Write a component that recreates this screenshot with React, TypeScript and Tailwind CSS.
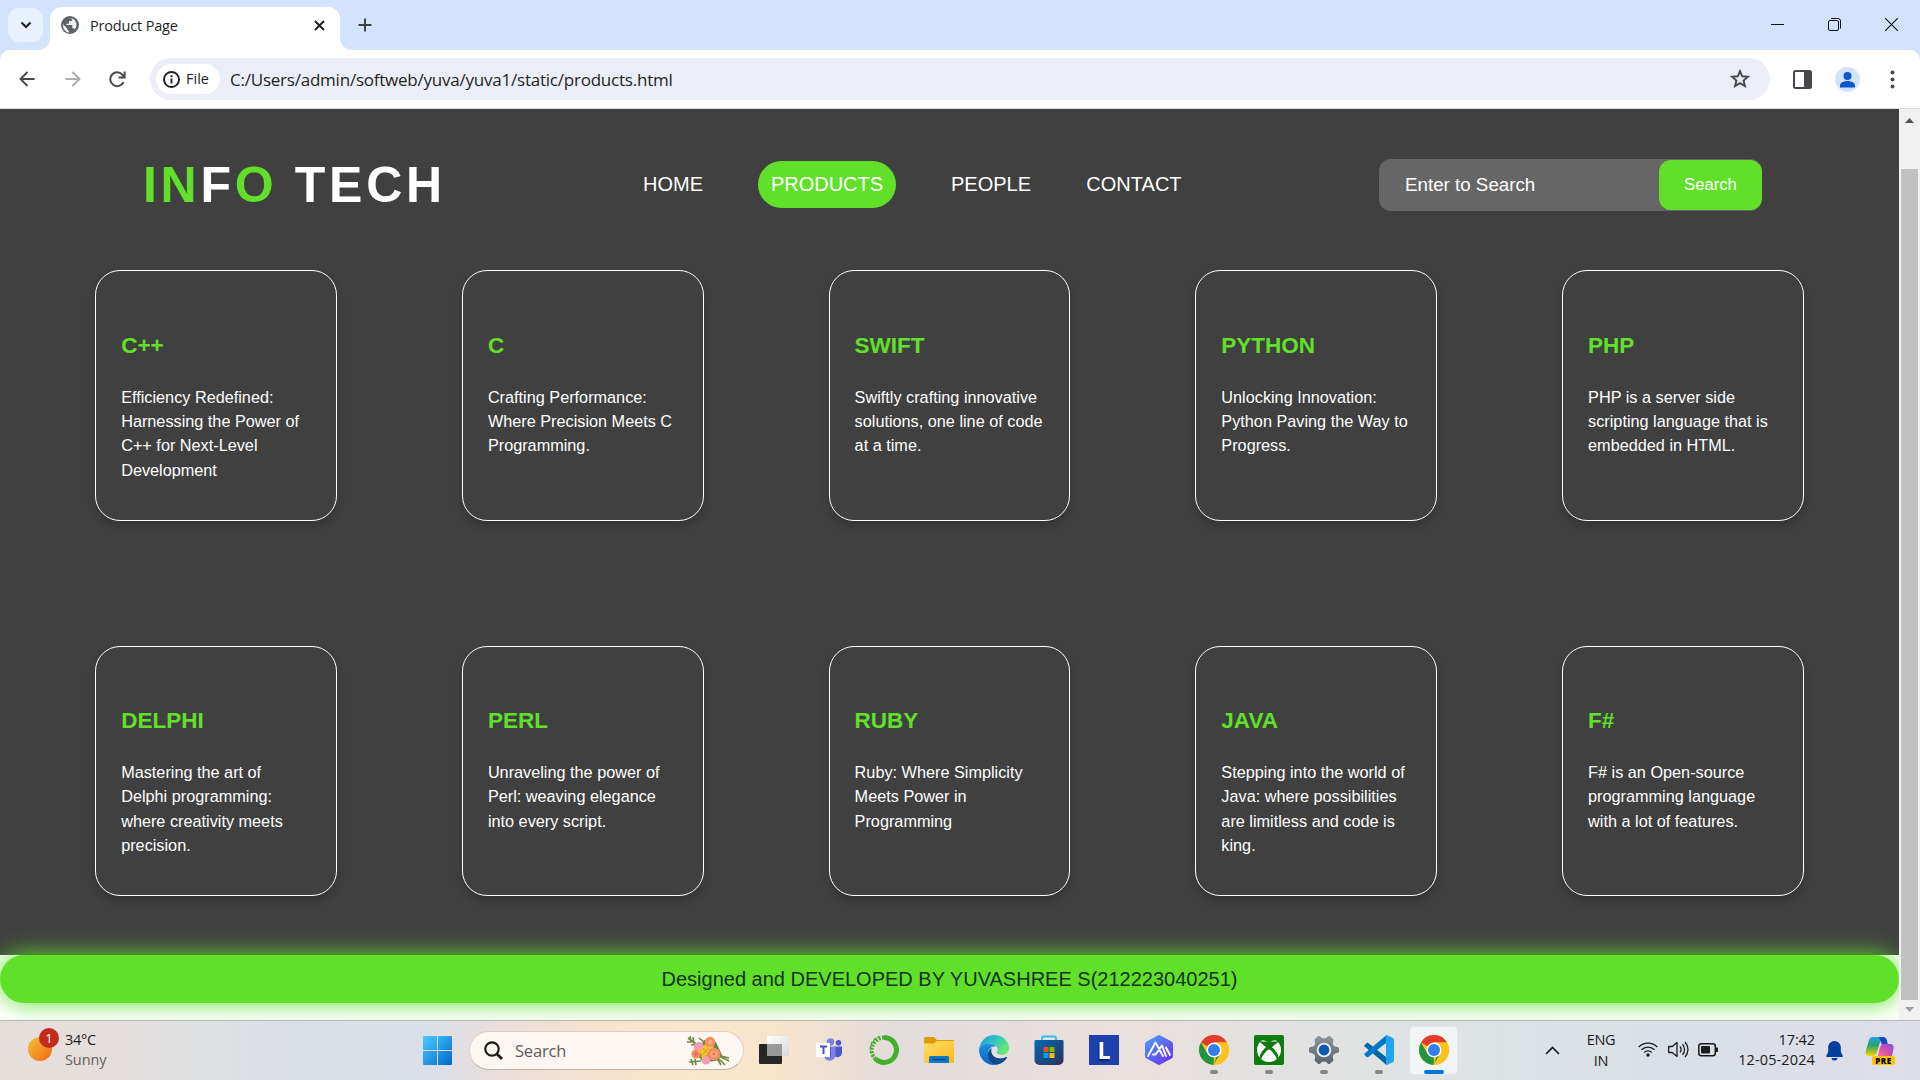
import React from "react";

const sans = "font-['Open_Sans',sans-serif]";
const arial = "font-['Liberation_Sans',Arial,sans-serif]";

type Product = { name: string; lines: string[] };

const products: Product[] = [
  { name: "C++", lines: ["Efficiency Redefined:", "Harnessing the Power of", "C++ for Next-Level", "Development"] },
  { name: "C", lines: ["Crafting Performance:", "Where Precision Meets C", "Programming."] },
  { name: "SWIFT", lines: ["Swiftly crafting innovative", "solutions, one line of code", "at a time."] },
  { name: "PYTHON", lines: ["Unlocking Innovation:", "Python Paving the Way to", "Progress."] },
  { name: "PHP", lines: ["PHP is a server side", "scripting language that is", "embedded in HTML."] },
  { name: "DELPHI", lines: ["Mastering the art of", "Delphi programming:", "where creativity meets", "precision."] },
  { name: "PERL", lines: ["Unraveling the power of", "Perl: weaving elegance", "into every script."] },
  { name: "RUBY", lines: ["Ruby: Where Simplicity", "Meets Power in", "Programming"] },
  { name: "JAVA", lines: ["Stepping into the world of", "Java: where possibilities", "are limitless and code is", "king."] },
  { name: "F#", lines: ["F# is an Open-source", "programming language", "with a lot of features."] },
];

function TitleBar() {
  return (
    <div className="flex h-[50px] items-start bg-[#d3e3fd]">
      <div className="ml-2 mt-2 flex h-[34px] w-[35px] items-center justify-center rounded-[11px] bg-[#e9f0fe]">
        <svg width="12" height="8" viewBox="0 0 12 8" fill="none" stroke="#1f1f1f" strokeWidth="2.2">
          <path d="M1.500 1.500 6 6l4.500-4.500" />
        </svg>
      </div>
      <svg className="ml-[-5px] mt-[38px]" width="12" height="12" viewBox="0 0 12 12">
        <path d="M12 0v12H0A12 12 0 0 0 12 0Z" fill="#fff" />
      </svg>
      <div className="mt-[7px] flex h-[43px] w-[290px] items-center rounded-t-[12px] bg-white pb-[7px] pl-[11px] pr-[15px]">
        <svg width="18" height="18" viewBox="0 0 18 18">
          <circle cx="9" cy="9" r="9" fill="#5f6368" />
          <path d="M2 8.300 6.200 12.500v1l1.800 1.800v1.500A7.900 7.900 0 0 1 2 8.300Z M7.500 2h3.700v1.500c0 .9-.7 1.600-1.600 1.600H8v1.600c0 .6-.4 1-1 1H5.500V9h4.800c.6 0 1 .4 1 1v2.300h.9c.8 0 1.300.4 1.600 1.100A7 7 0 0 0 11.500 2.500Z" fill="#fff" opacity=".92" />
        </svg>
        <span className={`${sans} ml-[11px] flex-1 whitespace-nowrap pt-px text-[14.500px] leading-5 tracking-[-0.17px] text-[#1f1f1f]`}>Product Page</span>
        <svg width="11" height="11" viewBox="0 0 11 11" stroke="#1f1f1f" strokeWidth="1.900">
          <path d="m1 1 9 9M10 1l-9 9" />
        </svg>
      </div>
      <svg className="mt-[38px]" width="12" height="12" viewBox="0 0 12 12">
        <path d="M0 0v12h12A12 12 0 0 1 0 0Z" fill="#fff" />
      </svg>
      <svg className="ml-[6px] mt-[18px]" width="14" height="14" viewBox="0 0 14 14" stroke="#3c3f43" strokeWidth="1.900">
        <path d="M7 .5v13M.5 7h13" />
      </svg>
      <div className="ml-auto mr-[22px] mt-[18px] flex items-start gap-[43.500px]">
        <svg width="13" height="13" viewBox="0 0 13 13" stroke="#111" strokeWidth="1">
          <path d="M0 6.500h13" />
        </svg>
        <svg width="14" height="14" viewBox="0 0 14 14" fill="none" stroke="#111" strokeWidth="1">
          <rect x=".5" y="2.500" width="10" height="10" rx="1.500" />
          <path d="M3 .5h7A2.500 2.500 0 0 1 12.500 3v7.500" />
        </svg>
        <svg width="13" height="13" viewBox="0 0 13 13" stroke="#111" strokeWidth="1.100">
          <path d="m0 0 13 13M13 0 0 13" />
        </svg>
      </div>
    </div>
  );
}

function Toolbar() {
  return (
    <div className="bg-[#d3e3fd]">
      <div className="flex h-[59px] items-start rounded-t-[10px] border-b border-[#dcdfe0] bg-white pt-2">
        <div className="flex h-[42px] items-center pl-[19px]">
          <svg width="16" height="16" viewBox="0 0 16 16" fill="none" stroke="#46484b" strokeWidth="1.900">
            <path d="M15.500 8H1.500M8.500 1 1.500 8l7 7" />
          </svg>
          <svg className="ml-[30px]" width="16" height="16" viewBox="0 0 16 16" fill="none" stroke="#a9abad" strokeWidth="1.900">
            <path d="M.5 8h14M7.500 1l7 7-7 7" />
          </svg>
          <svg className="ml-[28px]" width="17" height="17" viewBox="0 0 17 17" fill="none" stroke="#46484b" strokeWidth="2">
            <path d="M14.500 11A6.900 6.900 0 1 1 13.700 4.100L15 5.800" />
            <path d="M15.600.5v6h-6" />
          </svg>
        </div>
        <div className="ml-[24px] flex h-[42px] w-[1620px] items-center rounded-full bg-[#ebeef7] pl-[6px] pr-[20px]">
          <div className="flex h-[30px] w-[64px] items-center rounded-full bg-white pl-[7px]">
            <svg width="17" height="17" viewBox="0 0 17 17" fill="none" stroke="#1f1f1f" strokeWidth="1.900">
              <circle cx="8.500" cy="8.500" r="7.500" />
              <path d="M8.500 7.500v5M8.500 4.200v2" />
            </svg>
            <span className={`${sans} ml-[6px] text-[14.500px] font-medium leading-5 text-[#1f1f1f]`}>File</span>
          </div>
          <span className={`${sans} ml-[10px] flex-1 whitespace-nowrap pt-px text-[17px] leading-6 tracking-[-0.225px] text-[#1f1f1f]`}>C:/Users/admin/softweb/yuva/yuva1/static/products.html</span>
          <svg width="20" height="20" viewBox="0 0 20 20" fill="none" stroke="#46484b" strokeWidth="1.900">
            <path d="m10 2.100 2.200 5.200 5.700.5-4.300 3.700 1.300 5.500-4.900-2.900L5.100 17l1.300-5.500L2.100 7.800l5.700-.5Z" />
          </svg>
        </div>
        <div className="flex h-[42px] items-center pl-[23px]">
          <svg width="19" height="19" viewBox="0 0 19 19">
            <rect x="1" y="1" width="17" height="17" rx="1.500" fill="#fff" stroke="#46484b" strokeWidth="2" />
            <path d="M11 1h6.500v17H11Z" fill="#46484b" />
          </svg>
          <svg className="ml-[23px]" width="25" height="25" viewBox="0 0 25 25">
            <circle cx="12.500" cy="12.500" r="12.500" fill="#d3e3fd" />
            <circle cx="12.500" cy="9" r="4" fill="#0b57d0" />
            <path d="M5 20.500v-2c0-3 4-4.600 7.500-4.600s7.500 1.600 7.500 4.600v2Z" fill="#0b57d0" />
          </svg>
          <svg className="ml-[30px]" width="5" height="19" viewBox="0 0 5 19" fill="#46484b">
            <circle cx="2.500" cy="2.500" r="2" />
            <circle cx="2.500" cy="9.500" r="2" />
            <circle cx="2.500" cy="16.500" r="2" />
          </svg>
        </div>
      </div>
    </div>
  );
}

function SiteHeader() {
  return (
    <header className="flex h-[152px] items-start text-white">
      <div className="ml-[143px] mt-[47px] w-[500px] whitespace-nowrap text-[50px] font-bold leading-[58px] tracking-[3.700px]">
        <span className="text-[#61e02a]">IN</span>F<span className="text-[#61e02a]">O</span> TECH
      </div>
      <nav className="mt-[52px] flex h-[47px] w-[736px] items-center gap-[55.300px] text-[20px] leading-[23px]">
        <a className="pb-px">HOME</a>
        <a className="flex h-[47px] items-center rounded-[24px] bg-[#61e02a] px-[12.600px]">PRODUCTS</a>
        <a className="pb-px">PEOPLE</a>
        <a className="pb-px">CONTACT</a>
      </nav>
      <div className="mt-[50px] flex h-[52px] w-[383px] items-center justify-between rounded-[12px] bg-[#666666] pl-[26px]">
        <span className="pb-px text-[18.750px] leading-6">Enter to Search</span>
        <button className="h-[50px] w-[103px] rounded-[12px] bg-[#61e02a] pb-px text-[16.670px]">Search</button>
      </div>
    </header>
  );
}

function Card({ name, lines }: Product) {
  return (
    <article className="whitespace-nowrap rounded-[25px] border border-white pl-[25px] pt-[61.800px] text-white shadow-[0_5px_10px_rgba(0,0,0,0.2)]">
      <h2 className="text-[22.500px] font-bold leading-[26px] text-[#61e02a]">{name}</h2>
      <p className="mt-[25.650px] text-[16.250px] leading-[24.375px]">
        {lines.map((l) => (
          <span key={l} className="block">{l}</span>
        ))}
      </p>
    </article>
  );
}

function Page() {
  return (
    <div className="flex h-[911px]">
      <div className={`${arial} flex w-[1899px] flex-col overflow-hidden bg-white`}>
        <main className="h-[846px] bg-[#404040]">
          <SiteHeader />
          <section className="ml-[95.150px] mt-[9.160px] grid grid-cols-[repeat(5,241.650px)] grid-rows-[repeat(2,250.400px)] gap-x-[125.100px] gap-y-[125px]">
            {products.map((p) => (
              <Card key={p.name} {...p} />
            ))}
          </section>
        </main>
        <footer className="relative flex h-[48px] items-center justify-center rounded-full bg-[#61e02a] text-[20px] leading-6 text-[#12331f] shadow-[0_0_25px_#61e02a]">
          Designed and DEVELOPED BY YUVASHREE S(212223040251)
        </footer>
      </div>
      <div className="flex w-[21px] flex-col items-center bg-[#f1f1f1]">
        <svg className="mt-[9px]" width="9" height="5" viewBox="0 0 9 5"><path d="M0 5 4.500 0 9 5Z" fill="#505050" /></svg>
        <div className="mt-[46px] h-[831px] w-[17px] bg-[#c1c1c1]" />
        <svg className="mt-[7px]" width="9" height="5" viewBox="0 0 9 5"><path d="M0 0h9L4.500 5Z" fill="#a0a0a0" /></svg>
      </div>
    </div>
  );
}

function Flowers() {
  return (
    <svg width="44" height="32" viewBox="0 0 44 32">
      <g stroke="#6f8a45" strokeWidth="1.600" fill="none">
        <path d="M1 3 12 11M3 1l1 5M6 2l1 6M0 7l6 0M4 10l6-1M2 27l12-1M4 24l2 6M8 24l1 6M30 20l12 3M30 20l12 6M29 21l9 9M28 20l6 10" />
        <path d="M12 3l5 4" />
      </g>
      <path d="m9 19 8-14 12 2 6 13-6 6-13 1Z" fill="#5f8a49" />
      <circle cx="12" cy="12" r="5" fill="#f79ab8" />
      <circle cx="23" cy="7" r="5.200" fill="#f58b62" />
      <circle cx="23" cy="7" r="2.500" fill="#fba583" />
      <circle cx="9" cy="19" r="4.500" fill="#f58b62" />
      <circle cx="9" cy="19" r="2" fill="#e8705a" />
      <circle cx="19" cy="25" r="4.500" fill="#f79ab8" />
      <path d="m18 9 3 3 6-1-2 5 1 5-6-1-5 4-1-5-4-3 5-2Z" fill="#f2c52e" />
      <path d="m13 22 9-9M16 13l6 7" stroke="#d99b1a" />
      <circle cx="27" cy="19" r="6.300" fill="#f58b62" />
      <circle cx="27" cy="19" r="3.500" fill="#fba583" />
      <circle cx="27" cy="19" r="1.600" fill="#e8705a" />
    </svg>
  );
}

function Chrome() {
  return (
    <svg width="30" height="30" viewBox="0 0 30 30">
      <circle cx="15" cy="15" r="15" fill="#fcc31e" />
      <path d="M15 15 2 7.500A15 15 0 0 1 28 7.500H15Z" fill="#e33b2e" />
      <path d="M2 7.500 8.500 18.700 15 22l-0.500 8A15 15 0 0 1 2 7.500Z" fill="#229342" />
      <path d="M14.500 30 21.500 18.700 15 15 8.500 18.700A7.500 7.500 0 0 0 17.500 22Z" fill="#229342" />
      <path d="M21.400 18.500 14.600 30A15 15 0 0 0 28 7.500H15Z" fill="#fcc31e" />
      <circle cx="15" cy="15" r="7.500" fill="#fff" />
      <circle cx="15" cy="15" r="6" fill="#317ef0" />
    </svg>
  );
}

function TaskView() {
  return (
    <svg width="30" height="28" viewBox="0 0 30 28">
      <defs>
        <linearGradient id="tv" x1="0" y1="0" x2="1" y2="1"><stop stopColor="#fff" /><stop offset="1" stopColor="#d6d8da" /></linearGradient>
      </defs>
      <rect y="8" width="23" height="20" rx="1" fill="#262626" />
      <rect x="8" width="22" height="20" rx="1" fill="url(#tv)" />
      <path d="M8 8h15v12H8Z" fill="#999" />
    </svg>
  );
}

function Teams() {
  return (
    <svg width="26" height="24" viewBox="0 0 26 24">
      <circle cx="14.500" cy="4" r="3.700" fill="#7b83eb" />
      <circle cx="22.500" cy="4.800" r="2.800" fill="#5059c9" />
      <path d="M18 8.500h8v7a4.500 4.500 0 0 1-8 2Z" fill="#5059c9" />
      <path d="M8.500 8.500h11V17a6 6 0 0 1-11 3Z" fill="#7b83eb" />
      <path d="M9 9h6v10H9Z" fill="#4b53bc" />
      <rect y="5" width="14" height="14" fill="#fff" />
      <path d="M4 8.500h7M7.500 8.500V16" stroke="#4b53bc" strokeWidth="2" />
    </svg>
  );
}

function Anaconda() {
  return (
    <svg width="30" height="30" viewBox="0 0 30 30" fill="none" stroke="#43b02a">
      <path d="M15 2.600A12.400 12.400 0 1 1 6.500 24" strokeWidth="5" />
      <path d="M6.500 24A12.400 12.400 0 0 1 15 2.600" strokeWidth="4" strokeDasharray="2 1.400" />
      <path d="M4.500 22A12.400 12.400 0 0 1 12 1.500" strokeWidth="1.500" strokeDasharray="2.500 2" />
    </svg>
  );
}

function Folder() {
  return (
    <svg width="30" height="26" viewBox="0 0 30 26">
      <defs>
        <linearGradient id="fd" x1="0" y1="0" x2="1" y2="1"><stop stopColor="#ffdd6b" /><stop offset="1" stopColor="#fbb917" /></linearGradient>
      </defs>
      <path d="M0 1.500C0 .7.700 0 1.500 0H10l3 3h15.500c.8 0 1.500.7 1.500 1.500V9H0Z" fill="#dd9c06" />
      <path d="M0 6.500h10L13 4h17v22H0Z" fill="url(#fd)" />
      <path d="M5 26v-5.500C5 19.700 5.700 19 6.500 19h17c.8 0 1.500.7 1.500 1.500V26Z" fill="#0f78c8" />
      <path d="M8.500 22.500h13" stroke="#08488a" strokeWidth="1.500" />
    </svg>
  );
}

function Edge() {
  return (
    <svg width="30" height="30" viewBox="0 0 30 30">
      <defs>
        <linearGradient id="eg" x1="0" y1="0" x2="1" y2=".5"><stop stopColor="#1a9ce0" /><stop offset=".55" stopColor="#35c4c0" /><stop offset="1" stopColor="#66eb6e" /></linearGradient>
        <linearGradient id="eb" x1="0" y1="0" x2="0" y2="1"><stop stopColor="#1a94e0" /><stop offset="1" stopColor="#0b63c0" /></linearGradient>
      </defs>
      <path d="M0 15C1 6 7 0 15 0c9 0 15 6.500 15 12.500 0 5-3.500 7.500-7.500 7.500-3 0-5-1-5-2.500 0-1 1-1.500 1-3.500 0-3-3.500-5.500-8-5.500C5 8.500 1 11.500 0 15Z" fill="url(#eg)" />
      <path d="M0 15c1-4 5-6.500 10-6.500 3 0 5.500 1 7 2.700C12 11 9 14.500 9 19c0 5 3.500 9.500 8.500 10.800A15 15 0 0 1 0 15Z" fill="url(#eb)" />
      <path d="M12.500 13C10 15 8.500 17.500 9 21c.8 5 4.500 8.500 9 8.800 4.500-.8 8-3.500 10-7 .3-.7-.3-1-1-.7-6 2.900-14 .4-14.500-6Z" fill="#114a8b" />
      <path d="M12.500 16c0-2.500 1.800-4.200 3.500-4.200 1.400 0 2.500 1.200 2.500 2.700 0 1.300-1 1.900-1 3 0 1.500 2 2.500 5 2.500 1.800 0 3.500-.5 5-1.600-1 2-2.500 4-5 4.600-5 1-10-2-10-7Z" fill="#e6dedd" />
    </svg>
  );
}

function Store() {
  return (
    <svg width="30" height="30" viewBox="0 0 30 30">
      <defs>
        <linearGradient id="st" x1="0" y1="0" x2="1" y2="1"><stop stopColor="#0669b4" /><stop offset="1" stopColor="#2a3358" /></linearGradient>
      </defs>
      <path d="M8 7V3c0-1 .5-1.500 1.500-1.500h11C21.500 1.500 22 2 22 3v4" fill="none" stroke="#2cc0f5" strokeWidth="1.800" />
      <path d="M.5 6.500C.5 5.500 1 5 2 5h26c1 0 1.500.5 1.500 1.500V25a5 5 0 0 1-5 5h-19a5 5 0 0 1-5-5Z" fill="url(#st)" />
      <rect x="9.500" y="12" width="5" height="5" fill="#f25022" />
      <rect x="15.500" y="12" width="5" height="5" fill="#7fba00" />
      <rect x="9.500" y="18" width="5" height="5" fill="#00a4ef" />
      <rect x="15.500" y="18" width="5" height="5" fill="#ffb900" />
    </svg>
  );
}

function LApp() {
  return (
    <div className="flex h-[30px] w-[30px] items-center justify-center bg-[#1e3fae] pl-px">
      <span className={`${sans} text-[23px] font-bold leading-[30px] text-white [text-shadow:-1px_2px_1px_#0a2763]`}>L</span>
    </div>
  );
}

function HexApp() {
  return (
    <svg width="28" height="30" viewBox="0 0 28 30">
      <defs>
        <linearGradient id="hx" x1="0" y1="0" x2=".8" y2="1"><stop stopColor="#4ba3f5" /><stop offset="1" stopColor="#6a35ee" /></linearGradient>
      </defs>
      <path d="m14 1 12 6.500q1 .5 1 1.500v12q0 1-1 1.500L14 29 2 22.500Q1 22 1 21V9q0-1 1-1.500Z" fill="url(#hx)" stroke="url(#hx)" strokeWidth="2" />
      <path d="m3 21 7.500-13.500L18 21M8 19.500h2.500l6.500-9L21 21M21 12.500l4 7.500" fill="none" stroke="#fff" strokeWidth="1.900" strokeLinecap="round" strokeLinejoin="round" />
    </svg>
  );
}

function Xbox() {
  return (
    <svg width="30" height="30" viewBox="0 0 30 30">
      <rect width="30" height="30" rx="2" fill="#107c10" />
      <circle cx="15" cy="15" r="12" fill="#fff" />
      <path d="M6.500 5.500C9 4.500 13 6 15 7.500c2-1.500 6-3 8.500-2C21.500 3 18 2 15 2S8.500 3 6.500 5.500Z" fill="#107c10" />
      <path d="M7 6.500c-1 .5 3 2 8 7.500 5-5.500 9-7 8-7.500M15 11C9.500 14.500 5.500 20 6 24.500 8 19 13 14.500 15 12.500c2 2 7 6.500 9 12C24.500 20 20.500 14.500 15 11" fill="#107c10" stroke="#107c10" strokeWidth="1.600" />
    </svg>
  );
}

function Gear() {
  return (
    <svg width="30" height="30" viewBox="0 0 30 30">
      <defs>
        <linearGradient id="gr" x1="0" y1="0" x2="0" y2="1"><stop stopColor="#8b949d" /><stop offset="1" stopColor="#5c656e" /></linearGradient>
      </defs>
      <path d="M5.500 4.500 9 1.300q1-.7 2 0l1.500 1.400q2.500 1.400 5 0L19 1.300q1-.7 2 0l3.500 3.200-.7 4q.2 2.500 2.500 3l3 1q.7.200.7 1v3q0 .8-.7 1l-3 1q-2.300.5-2.500 3l.7 4-3.500 3.200q-1 .7-2 0l-1.500-1.400q-2.500-1.400-5 0L11 28.700q-1 .7-2 0l-3.500-3.200.7-4q-.2-2.500-2.500-3l-3-1q-.7-.2-.7-1v-3q0-.8.7-1l3-1q2.300-.5 2.500-3Z" fill="url(#gr)" />
      <circle cx="15" cy="15" r="7.300" fill="#e9ebee" />
      <circle cx="15" cy="15" r="5.400" fill="#0b5cad" />
    </svg>
  );
}

function VsCode() {
  return (
    <svg width="30" height="30" viewBox="0 0 30 30">
      <path d="M.5 10.200 2.700 8q.7-.6 1.500 0L22 22v7.500L.6 11.500q-.6-.7-.1-1.300Z" fill="#0065a9" />
      <path d="M.5 19.800 2.700 22q.7.600 1.500 0L22 8V.5L.6 18.500q-.6.700-.1 1.300Z" fill="#007acc" />
      <path d="M22 .3q.5-.4 1.300-.1l5.800 2.700q.9.500.9 1.500v21.200q0 1-.9 1.500l-5.800 2.700q-.8.300-1.300-.1Z" fill="#22a5f1" />
    </svg>
  );
}

const apps: { icon: React.ReactElement; state?: "open" | "active" }[] = [
  { icon: <TaskView /> },
  { icon: <Teams /> },
  { icon: <Anaconda /> },
  { icon: <Folder /> },
  { icon: <Edge /> },
  { icon: <Store /> },
  { icon: <LApp /> },
  { icon: <HexApp /> },
  { icon: <Chrome />, state: "open" },
  { icon: <Xbox />, state: "open" },
  { icon: <Gear />, state: "open" },
  { icon: <VsCode />, state: "open" },
  { icon: <Chrome />, state: "active" },
];

function Copilot() {
  return (
    <div className="relative h-[30px] w-[30px]">
      <svg width="30" height="24" viewBox="0 0 30 24">
        <defs>
          <linearGradient id="c1" x1="0" y1="0" x2="0" y2="1"><stop stopColor="#1ba4e8" /><stop offset=".45" stopColor="#2fa06e" /><stop offset="1" stopColor="#f5d800" /></linearGradient>
          <linearGradient id="c2" x1="1" y1="0" x2="0" y2="1"><stop stopColor="#8a48e8" /><stop offset=".5" stopColor="#e055a0" /><stop offset="1" stopColor="#fb9a6a" /></linearGradient>
        </defs>
        <path d="M7 0h12c-3 1-4 5-6 12-1 4-2 7-5 7H4c-3 0-4-2-3-6L4 3q1-3 3-3Z" fill="url(#c1)" />
        <path d="M14 0h4q3 0 4 4l1 4h-6Z" fill="#1844c8" />
        <path d="M18 7h7c3 0 4 2 3.500 5L27 19q-.5 4-4 4H9c3 0 4-4 5-9 1-4 2-7 4-7Z" fill="url(#c2)" />
      </svg>
      <span className={`${sans} absolute left-[7px] top-[19px] flex h-[9px] w-[23px] items-center justify-center rounded-[2px] bg-[#fdc500] text-[8px] font-extrabold tracking-[0.600px] text-black`}>PRE</span>
    </div>
  );
}

function Taskbar() {
  return (
    <div className={`${sans} flex h-[60px] items-start border-t border-[#b3b4b3] bg-[linear-gradient(90deg,#e5dfdb_0px,#e6dedb_80px,#dfe0e1_190px,#dadfe5_290px,#dbdfe7_430px,#ecdeda_510px,#f5e3ce_600px,#f9e6cb_690px,#f6e4cd_790px,#e3dcdb_890px,#e6dddd_1000px,#ebe0dd_1130px,#e3e1e0_1230px,#dfe2e3_1420px,#dce2e5_1520px,#dadfe8_1700px,#dedee8_1920px)] text-[#1b1b1b]`}>
      <div className="relative ml-[28px] mt-[16px] h-6 w-6 rounded-full bg-gradient-to-br from-[#eec23a] to-[#f2640c]">
        <span className="absolute left-[11px] top-[-9px] flex h-5 w-5 items-center justify-center rounded-full bg-[#c42b1c] text-[13px] leading-5 text-white">1</span>
      </div>
      <div className="ml-[13px] mt-[9px] w-[358px] text-[14.500px] leading-5 tracking-[-0.3px]">
        <div>34°C</div>
        <div className="tracking-[-0.1px] text-[#626160]">Sunny</div>
      </div>
      <svg className="mt-[15px]" width="29" height="29" viewBox="0 0 29 29">
        <defs>
          <linearGradient id="wn" x1="0" y1="0" x2="1" y2="1"><stop stopColor="#4cccff" /><stop offset="1" stopColor="#0067c8" /></linearGradient>
        </defs>
        <path d="M1 0h13v14H0V1q0-1 1-1ZM15 0h13q1 0 1 1v13H15ZM0 15h14v14H1q-1 0-1-1ZM15 15h14v13q0 1-1 1H15Z" fill="url(#wn)" />
      </svg>
      <div className="ml-[17px] mt-[10px] flex h-[39px] w-[275px] items-center rounded-full border border-[#dccfc4] border-b-[#bdb3ab] bg-[#fdf7f2] pl-[14px] pr-[12px]">
        <svg width="19" height="19" viewBox="0 0 19 19" fill="none" stroke="#1d1d1d" strokeWidth="2.200">
          <circle cx="8" cy="8" r="6.700" />
          <path d="m12.500 12.500 5.500 5.500" strokeWidth="2.800" />
        </svg>
        <span className="ml-[12px] flex-1 text-[16.500px] leading-6 tracking-[-0.2px] text-[#5c5957]">Search</span>
        <Flowers />
      </div>
      <div className="ml-[2px] flex">
        {apps.map((a, i) => (
          <div key={i} className="flex h-[59px] w-[55px] justify-center pt-[5px]">
            <div className={a.state === "active" ? "flex h-[49px] w-[49px] flex-col items-center rounded-[5px] border border-[#e4e6e7] bg-[#f3f4f6] pt-[8px]" : "flex h-[49px] w-[49px] flex-col items-center pt-[9px]"}>
              <div className="flex h-[30px] items-center">{a.icon}</div>
              {a.state === "open" && <div className="mt-[5px] h-1 w-2 rounded-full bg-[#858585]" />}
              {a.state === "active" && <div className="mt-[5px] h-1 w-5 rounded-full bg-[#0078d4]" />}
            </div>
          </div>
        ))}
      </div>
      <div className="ml-auto mr-[25px] flex items-start">
        <svg className="mt-[25px]" width="15" height="9" viewBox="0 0 15 9" fill="none" stroke="#1b1b1b" strokeWidth="1.700">
          <path d="m1 8 6.500-6.500L14 8" />
        </svg>
        <div className="ml-[25px] mt-[9px] w-[32px] text-center text-[14.500px] leading-[20.500px] tracking-[-0.3px]">
          <div>ENG</div>
          <div>IN</div>
        </div>
        <svg className="ml-[21px] mt-[20px]" width="20" height="16" viewBox="0 0 20 16" fill="none" stroke="#1b1b1b" strokeWidth="1.300">
          <path d="M.7 6a13 13 0 0 1 18.600 0M3.500 8.800a9.200 9.200 0 0 1 13 0M6.200 11.500a5.400 5.400 0 0 1 7.600 0" />
          <circle cx="10" cy="14" r="1.700" fill="#1b1b1b" stroke="none" />
        </svg>
        <svg className="ml-[10px] mt-[20px]" width="21" height="17" viewBox="0 0 21 17" fill="none" stroke="#1b1b1b" strokeWidth="1.300">
          <path d="M.7 5.500h3.600L9 1.500v14l-4.700-4H.7Z" strokeLinejoin="round" />
          <path d="M12 5.500a5 5 0 0 1 0 6M14.500 3.200a8 8 0 0 1 0 10.600M17 1a11 11 0 0 1 0 15" />
        </svg>
        <svg className="ml-[9px] mt-[22px]" width="21" height="14" viewBox="0 0 21 14">
          <rect x=".8" y=".8" width="16.500" height="11.900" rx="2.500" fill="none" stroke="#1b1b1b" strokeWidth="1.500" />
          <rect x="3" y="3" width="9" height="7.500" rx="1" fill="#1b1b1b" />
          <path d="M18 4.500h1q1 0 1 1V8q0 1-1 1h-1Z" fill="#1b1b1b" />
        </svg>
        <div className="ml-[16px] mt-[9px] w-[80px] whitespace-nowrap text-right text-[14.500px] leading-5 tracking-[0.120px]">
          <div className="tracking-[-0.1px]">17:42</div>
          <div>12-05-2024</div>
        </div>
        <svg className="ml-[11px] mt-[20px]" width="17" height="20" viewBox="0 0 17 20" fill="#00409c">
          <path d="M8.500 0a6.300 6.300 0 0 1 6.300 6.300v4.500l2 4.200q.2.800-.6 1H.8q-.8-.2-.6-1l2-4.200V6.300A6.300 6.300 0 0 1 8.500 0ZM5.500 17h6a3 2.500 0 0 1-6 0Z" />
        </svg>
        <div className="ml-[22px] mt-[16px]"><Copilot /></div>
      </div>
    </div>
  );
}

export default function App() {
  return (
    <div className="flex h-[1080px] w-[1920px] flex-col overflow-hidden">
      <TitleBar />
      <Toolbar />
      <Page />
      <Taskbar />
    </div>
  );
}
